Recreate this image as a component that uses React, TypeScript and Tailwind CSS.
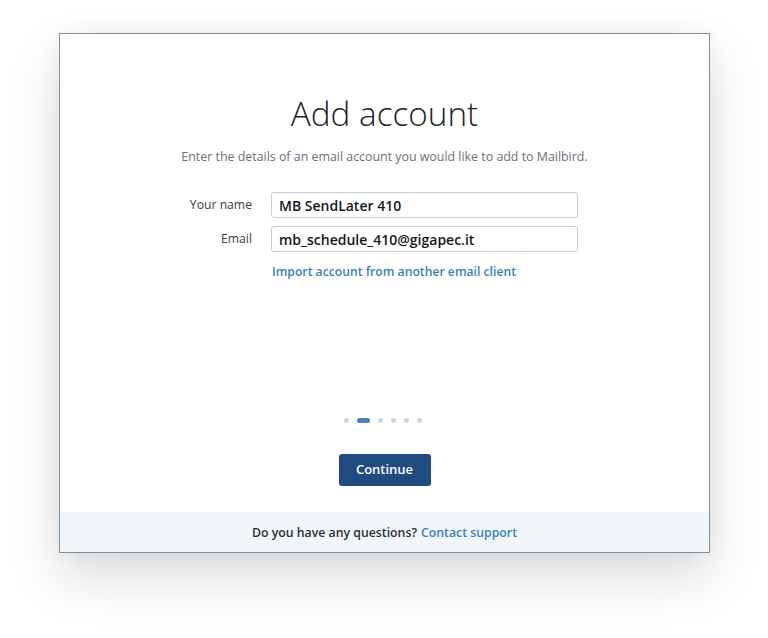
import React from "react";

export default function App() {
  return (
    <div className="w-[768px] h-[638px] bg-white overflow-hidden" style={{ fontFamily: '"Open Sans", "Noto Sans", sans-serif' }}>
      <div className="ml-[59px] mt-[33px] w-[651px] h-[520px] border border-[#7f90a6] bg-white flex flex-col shadow-[0_24px_50px_rgba(0,0,0,0.14),0_0_20px_rgba(0,0,0,0.05)]">
        <div className="flex-1 flex flex-col">
          <h1 className="mt-[56px] text-center text-[33.3px] leading-[46px] font-light text-[#1f2329]">Add account</h1>
          <p className="mt-[12px] text-center text-[12.4px] leading-[18px] text-[#6b7079]">
            Enter the details of an email account you would like to add to Mailbird.
          </p>
          <div className="mt-[26px] pl-[112px] flex flex-col gap-[8px]">
            <div className="flex items-center">
              <label className="w-[80px] text-right text-[12.2px] text-[#3a3d42]">Your name</label>
              <div className="ml-[19px] w-[307px] h-[26px] border border-[#c9ccd1] rounded-[3px] px-[7px] flex items-center text-[14px] font-semibold text-[#15181c]">
                MB SendLater 410
              </div>
            </div>
            <div className="flex items-center">
              <label className="w-[80px] text-right text-[12.2px] text-[#3a3d42]">Email</label>
              <div className="ml-[19px] w-[307px] h-[26px] border border-[#c9ccd1] rounded-[3px] px-[7px] flex items-center text-[14px] font-semibold text-[#15181c]">
                mb_schedule_410@gigapec.it
              </div>
            </div>
            <div className="pl-[100px] mt-[3px] text-[12.2px] leading-[18px] font-semibold text-[#3b7fc0]">
              Import account from another email client
            </div>
          </div>
          <div className="flex-1" />
          <div className="flex justify-center items-center gap-[8px] -ml-[3px]">
            <span className="w-[5px] h-[5px] rounded-full bg-[#c9d8e8]" />
            <span className="w-[13px] h-[5px] rounded-full bg-[#4a7fc4]" />
            <span className="w-[5px] h-[5px] rounded-full bg-[#c9d8e8]" />
            <span className="w-[5px] h-[5px] rounded-full bg-[#c9d8e8]" />
            <span className="w-[5px] h-[5px] rounded-full bg-[#c9d8e8]" />
            <span className="w-[5px] h-[5px] rounded-full bg-[#c9d8e8]" />
          </div>
          <div className="mt-[31px] mb-[26px] flex justify-center">
            <button className="w-[92px] h-[32px] rounded-[3px] bg-[#1f4b80] text-white text-[13px] font-semibold">Continue</button>
          </div>
        </div>
        <div className="h-[40px] bg-[#f1f6fb] flex items-center justify-center text-[12.3px] font-semibold pt-[2px]">
          <span className="text-[#2a2f38]">Do you have any questions?</span>
          <span className="ml-[4px] text-[#3b7fc0]">Contact support</span>
        </div>
      </div>
    </div>
  );
}
